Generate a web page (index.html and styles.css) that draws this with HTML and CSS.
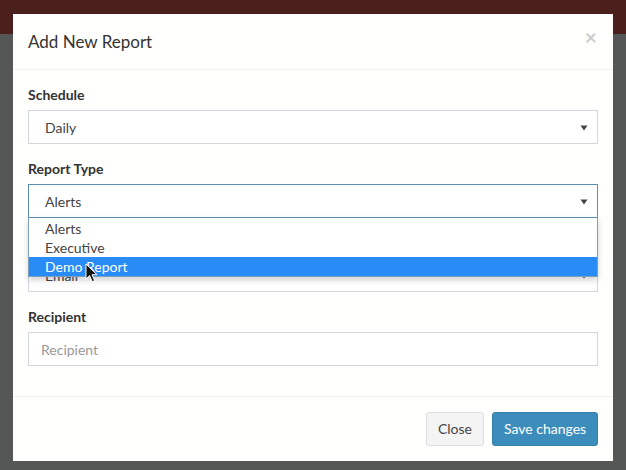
FILE: index.html
```html
<!DOCTYPE html>
<html>
<head>
<meta charset="utf-8">
<link rel="stylesheet" href="styles.css">
</head>
<body>
<div class="page">
  <div class="topbar"></div>
  <div class="backdrop"></div>
  <div class="modal">
    <div class="modal-header">
      <h4 class="modal-title">Add New Report</h4>
      <span class="close">×</span>
    </div>
    <div class="modal-body">
      <div class="form-group">
        <label class="label">Schedule</label>
        <div class="control select">
          <span class="value">Daily</span>
          <svg class="caret" width="8" height="6" viewBox="0 0 8 6"><path d="M0.5 0.5 L7.5 0.5 L4 5.5 Z" fill="#444"/></svg>
        </div>
      </div>
      <div class="form-group dd-host">
        <label class="label">Report Type</label>
        <div class="control select focus">
          <span class="value">Alerts</span>
          <svg class="caret" width="8" height="6" viewBox="0 0 8 6"><path d="M0.5 0.5 L7.5 0.5 L4 5.5 Z" fill="#444"/></svg>
        </div>
        <ul class="dropdown">
          <li class="opt">Alerts</li>
          <li class="opt">Executive</li>
          <li class="opt active">Demo Report</li>
        </ul>
        <svg class="cursor" width="14" height="20" viewBox="0 0 14 20"><path d="M1 1 L1 16 L4.6 12.6 L7.2 18.6 L9.6 17.6 L7 11.7 L12 11.7 Z" fill="#111" stroke="#fff" stroke-width="1"/></svg>
      </div>
      <div class="form-group">
        <label class="label">Delivery</label>
        <div class="control select">
          <span class="value">Email</span>
          <svg class="caret" width="8" height="6" viewBox="0 0 8 6"><path d="M0.5 0.5 L7.5 0.5 L4 5.5 Z" fill="#444"/></svg>
        </div>
      </div>
      <div class="form-group">
        <label class="label">Recipient</label>
        <div class="control input"><span class="placeholder">Recipient</span></div>
      </div>
    </div>
    <div class="modal-footer">
      <button class="btn btn-default">Close</button>
      <button class="btn btn-primary">Save changes</button>
    </div>
  </div>
</div>
</body>
</html>
```

FILE: styles.css
```css
* { box-sizing: border-box; }
html, body { margin: 0; padding: 0; }
body {
  width: 626px;
  height: 470px;
  overflow: hidden;
  font-family: Lato, "Open Sans", sans-serif;
  font-size: 14px;
  color: #333;
  background: #555656;
}
.page {
  position: relative;
  width: 626px;
  height: 470px;
  display: flex;
  flex-direction: column;
}
.topbar {
  height: 34px;
  background: #4a1f1c;
  flex: none;
}
.backdrop { flex: 1; background: #555656; }
.modal {
  position: absolute;
  left: 13px;
  top: 14px;
  width: 600px;
  height: 447px;
  background: #fffffd;
  display: flex;
  flex-direction: column;
}
.modal-header {
  height: 56px;
  padding: 15px;
  border-bottom: 1px solid #f0f0f0;
  display: flex;
  align-items: center;
  justify-content: space-between;
}
.modal-title {
  margin: 0;
  font-size: 17px;
  font-weight: 400;
  color: #333;
  line-height: 26px;
}
.close {
  font-size: 21px;
  font-weight: 700;
  line-height: 1;
  color: #000;
  opacity: 0.2;
  margin-top: -10px;
  margin-right: 1px;
}
.modal-body {
  padding: 15px 15px 0 15px;
  display: flex;
  flex-direction: column;
  height: 326px;
}
.form-group {
  margin-bottom: 15px;
  display: flex;
  flex-direction: column;
}
.dd-host { position: relative; }
.label {
  font-weight: 700;
  font-size: 14px;
  line-height: 20px;
  margin-bottom: 5px;
  color: #333;
}
.control {
  height: 34px;
  border: 1px solid #d2d6de;
  display: flex;
  align-items: center;
  padding: 0 9px 0 16px;
  color: #444;
  background: #fff;
}
.control.focus { border-color: #5b8fb0; }
.select { justify-content: space-between; }
.value { font-size: 14px; }
.caret { display: block; margin-top: 1px; }
.input { padding-left: 12px; }
.placeholder { color: #999; }
.dropdown {
  position: absolute;
  left: 0;
  right: 0;
  top: 58px;
  margin: 0;
  padding: 1px 0 0 0;
  list-style: none;
  background: #fff;
  border: 1px solid #7d9fc0;
  border-top-color: #5b8fb0;
  box-shadow: 0 3px 6px rgba(0, 0, 0, 0.18);
  z-index: 2;
}
.opt {
  height: 19px;
  line-height: 19px;
  padding-left: 16px;
  color: #444;
}
.opt.active { background: #298bf5; color: #fff; }
.cursor {
  position: absolute;
  left: 57px;
  top: 104px;
  z-index: 3;
}
.modal-footer {
  border-top: 1px solid #f0f0f0;
  padding: 15px;
  display: flex;
  justify-content: flex-end;
  gap: 8px;
  margin-top: auto;
}
.btn {
  font-family: inherit;
  font-size: 14px;
  height: 34px;
  padding: 0 6px;
  border-radius: 3px;
  border: 1px solid;
  line-height: 1;
  white-space: nowrap;
}
.btn-default {
  background: #f4f4f4;
  border-color: #ddd;
  color: #444;
  width: 58px;
}
.btn-primary {
  background: #3c8dbc;
  border-color: #367fa9;
  color: #fff;
  width: 106px;
}
```
